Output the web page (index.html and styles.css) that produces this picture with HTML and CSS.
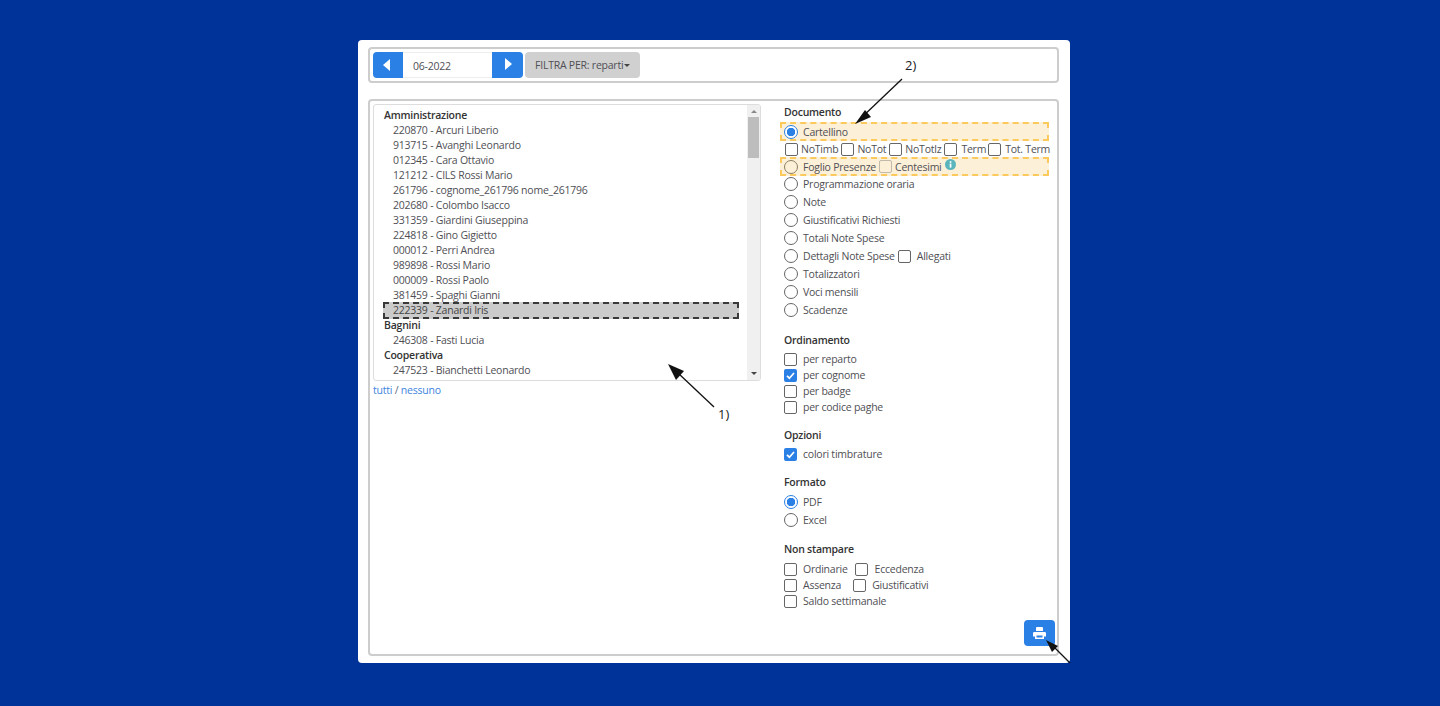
FILE: index.html
```html
<!DOCTYPE html>
<html lang="it">
<head>
<meta charset="utf-8">
<title>Stampa cartellino</title>
<link rel="stylesheet" href="styles.css">
</head>
<body>
<main class="card">
  <div class="toolbar">
    <button class="nav nav-l"><svg width="8" height="12" viewBox="0 0 8 12"><path d="M7 0v12L0 6z" fill="#fff"/></svg></button>
    <div class="date">06-2022</div>
    <button class="nav nav-r"><svg width="8" height="12" viewBox="0 0 8 12"><path d="M1 0v12l7-6z" fill="#fff"/></svg></button>
    <button class="filter">FILTRA PER: reparti<span class="caret"></span></button>
  </div>
  <div class="panel">
    <section class="left">
      <div class="listbox">
        <div class="list">
          <div class="grp">Amministrazione</div>
          <div class="item">220870 - Arcuri Liberio</div>
          <div class="item">913715 - Avanghi Leonardo</div>
          <div class="item">012345 - Cara Ottavio</div>
          <div class="item">121212 - CILS Rossi Mario</div>
          <div class="item">261796 - cognome_261796 nome_261796</div>
          <div class="item">202680 - Colombo Isacco</div>
          <div class="item">331359 - Giardini Giuseppina</div>
          <div class="item">224818 - Gino Gigietto</div>
          <div class="item">000012 - Perri Andrea</div>
          <div class="item">989898 - Rossi Mario</div>
          <div class="item">000009 - Rossi Paolo</div>
          <div class="item">381459 - Spaghi Gianni</div>
          <div class="item sel">222339 - Zanardi Iris</div>
          <div class="grp">Bagnini</div>
          <div class="item">246308 - Fasti Lucia</div>
          <div class="grp">Cooperativa</div>
          <div class="item">247523 - Bianchetti Leonardo</div>
        </div>
        <div class="scroll">
          <span class="up"></span>
          <span class="thumb"></span>
          <span class="down"></span>
        </div>
      </div>
      <div class="links"><a>tutti</a> / <a>nessuno</a></div>
    </section>
    <section class="right">
      <h4 class="h-doc">Documento</h4>
      <div class="row hl"><i class="radio on"></i><span>Cartellino</span></div>
      <div class="row sub">
        <i class="box"></i><span class="s1">NoTimb</span>
        <i class="box"></i><span class="s2">NoTot</span>
        <i class="box"></i><span class="s3">NoTotlz</span>
        <i class="box"></i><span class="s4">Term</span>
        <i class="box"></i><span class="s5">Tot. Term</span>
      </div>
      <div class="row hl hl2"><i class="radio"></i><span>Foglio Presenze</span><i class="box cent"></i><span class="c-t">Centesimi</span><svg class="info" width="11" height="11" viewBox="0 0 11 11"><circle cx="5.5" cy="5.5" r="5.5" fill="#5bb5bd"/><rect x="4.7" y="4.6" width="1.7" height="4" fill="#fff"/><rect x="4.7" y="2.2" width="1.7" height="1.6" fill="#fff"/></svg></div>
      <div class="row r18"><i class="radio"></i><span>Programmazione oraria</span></div>
      <div class="row r18"><i class="radio"></i><span>Note</span></div>
      <div class="row r18"><i class="radio"></i><span>Giustificativi Richiesti</span></div>
      <div class="row r18"><i class="radio"></i><span>Totali Note Spese</span></div>
      <div class="row r18"><i class="radio"></i><span>Dettagli Note Spese</span><i class="box allegati"></i><span class="t3">Allegati</span></div>
      <div class="row r18"><i class="radio"></i><span>Totalizzatori</span></div>
      <div class="row r18"><i class="radio"></i><span>Voci mensili</span></div>
      <div class="row r18"><i class="radio"></i><span>Scadenze</span></div>

      <h4 class="h-sec h-ord">Ordinamento</h4>
      <div class="row r16 first"><i class="box"></i><span class="t3">per reparto</span></div>
      <div class="row r16"><i class="box on"><svg width="13" height="13" viewBox="0 0 13 13"><path d="M3 6.8l2.4 2.4L10 4" fill="none" stroke="#fff" stroke-width="1.7"/></svg></i><span class="t3">per cognome</span></div>
      <div class="row r16"><i class="box"></i><span class="t3">per badge</span></div>
      <div class="row r16"><i class="box"></i><span class="t3">per codice paghe</span></div>

      <h4 class="h-sec">Opzioni</h4>
      <div class="row r16 first"><i class="box on"><svg width="13" height="13" viewBox="0 0 13 13"><path d="M3 6.8l2.4 2.4L10 4" fill="none" stroke="#fff" stroke-width="1.7"/></svg></i><span class="t3">colori timbrature</span></div>

      <h4 class="h-sec">Formato</h4>
      <div class="row r18 first"><i class="radio on"></i><span>PDF</span></div>
      <div class="row r18"><i class="radio"></i><span>Excel</span></div>

      <h4 class="h-sec">Non stampare</h4>
      <div class="row r16 first2"><i class="box"></i><span class="t3">Ordinarie</span><i class="box gap8"></i><span class="t4">Eccedenza</span></div>
      <div class="row r16"><i class="box"></i><span class="t3">Assenza</span><i class="box gap11"></i><span class="t3">Giustificativi</span></div>
      <div class="row r16"><i class="box"></i><span class="t3">Saldo settimanale</span></div>

      <div class="actions">
        <button class="print"><svg width="13" height="12" viewBox="0 0 13 12"><path fill="#fff" d="M3 1.200C3 .5 3.500 0 4.200 0h4.600C9.500 0 10 .5 10 1.200V4H3zM1.300 5h10.400c.7 0 1.300.6 1.300 1.300V9.500h-2V12H2V9.500H0V6.300C0 5.600.6 5 1.300 5zM3.500 8.500V10.500h6V8.500z"/></svg></button>
      </div>
    </section>
  </div>
</main>
<svg class="notes" width="1440" height="706" viewBox="0 0 1440 706">
  <g stroke="#111" stroke-width="1.300" fill="none">
    <path d="M902 79 860 119"/><path d="M714 407 678 373"/><path d="M1070 663 1051 644"/>
  </g>
  <g fill="#111">
    <path d="M855 124 865 110 871 117z"/>
    <path d="M668 364 684 371 676 380z"/>
    <path d="M1046 640 1058 646 1052 652z"/>
  </g>
  <text x="905" y="70" class="note">2)</text>
  <text x="718" y="419" class="note">1)</text>
</svg>
</body>
</html>
```
FILE: styles.css
```css
* { box-sizing: border-box; }
html, body { margin: 0; height: 706px; overflow: hidden; }
body {
  background: #00339a;
  font-family: "Open Sans", "Noto Sans", sans-serif;
  font-size: 10.5px;
  letter-spacing: -.23px;
  color: #4f4f55;
  position: relative;
}
.card {
  width: 712px;
  height: 623px;
  margin: 40px 0 0 358px;
  padding: 7px 11px 7px 10px;
  background: #fff;
  border-radius: 4px;
}
.toolbar {
  height: 36px;
  border: 2px solid #cdcdcd;
  border-radius: 4px;
  padding: 3px;
  display: flex;
  align-items: stretch;
}
button { border: 0; font: inherit; letter-spacing: inherit; padding: 0; }
.nav {
  width: 31px;
  height: 26px;
  background: #2a80e4;
  display: flex;
  align-items: center;
  justify-content: center;
}
.nav-l { width: 30px; border-radius: 4px 0 0 4px; padding-right: 2px; }
.nav-r { border-radius: 0 4px 4px 0; padding-bottom: 2px; }
.date {
  width: 89px;
  height: 26px;
  padding-left: 10px;
  line-height: 26px;
  border: 1px solid #eee;
  border-width: 1px 0;
}
.filter {
  margin-left: 2px;
  width: 115px;
  height: 26px;
  background: #d0d0d0;
  border-radius: 4px;
  color: #4f4f55;
  display: flex;
  align-items: center;
  padding-left: 10px;
}
.caret {
  margin-left: 1px;
  border: 3px solid transparent;
  border-top-color: #444;
  border-bottom: 0;
}
.panel {
  margin-top: 16px;
  height: 557px;
  border: 2px solid #cdcdcd;
  border-radius: 4px;
  padding: 3px;
  display: flex;
}
.left { width: 388px; flex: none; }
.listbox {
  height: 277px;
  border: 1px solid #ddd;
  border-radius: 3px;
  display: flex;
  overflow: hidden;
}
.list { flex: 1; padding: 3px 8px 0 9px; overflow: hidden; }
.grp { height: 15px; line-height: 15px; font-weight: 600; color: #333; padding-left: 1px; }
.item { height: 15px; line-height: 15px; padding-left: 10px; }
.sel {
  height: 17px;
  margin: -1px 0;
  position: relative;
  background: #cbcbcb;
  border: 2px dashed #3a3a3a;
  line-height: 13px;
  padding-left: 8px;
  color: #444;
}
.scroll {
  width: 13px;
  flex: none;
  background: #f0f0f0;
  display: flex;
  flex-direction: column;
  align-items: center;
}
.up, .down { width: 0; height: 0; border: 3px solid transparent; }
.up { border-bottom: 3px solid #888; border-top: 0; margin-top: 5px; }
.thumb { width: 11px; height: 41px; margin-top: 4px; background: #bdbdbd; }
.down { border-top: 3px solid #444; border-bottom: 0; margin-top: auto; margin-bottom: 5px; }
.links { margin-top: 2px; height: 15px; line-height: 15px; color: #5b6c80; }
.links a { color: #3d84e0; }
.right {
  margin-left: 23px;
  width: 271px;
  flex: none;
  display: flex;
  flex-direction: column;
}
h4 {
  margin: 0;
  font-size: 10.500px;
  font-weight: 600;
  color: #333;
  height: 16px;
  line-height: 16px;
}
.h-sec { margin-top: 12px; }
.h-ord { margin-top: 13px; }
.row { display: flex; align-items: center; white-space: nowrap; }
.r18 { height: 18px; }
.r16 { height: 16px; }
.first { margin-top: 3px; }
.first2 { margin-top: 4px; }
.hl {
  height: 19px;
  width: 269px;
  margin: 2px 0 0 -4px;
  padding-left: 2px;
  background: #fdf0d8;
  border: 2px dashed #fcc95c;
}
.hl2 { margin: 0 0 -1px -4px; }
.sub { height: 16px; padding-left: 1px; }
.radio {
  flex: none;
  width: 14px;
  height: 14px;
  border: 1.500px solid #666;
  border-radius: 50%;
  margin-right: 5px;
  background: #fff;
}
.hl .radio { background: transparent; }
.hl2 .radio { border-color: #8a7f62; }
.radio.on { border-color: #2a80e4; background: radial-gradient(circle, #2a80e4 0 4px, #fff 4.500px); }
.box {
  flex: none;
  width: 13px;
  height: 13px;
  border: 1.500px solid #666;
  border-radius: 2px;
  display: block;
}
.box.on { background: #2a80e4; border: 0; display: flex; align-items: center; justify-content: center; }
.s1 { margin: 0 3px; }
.s2 { margin: 0 3px 0 3px; }
.s3 { margin: 0 3px 0 3px; }
.s4 { margin: 0 2px 0 4px; }
.s5 { margin: 0 0 0 4px; }
.t3 { margin-left: 6px; }
.t4 { margin-left: 7px; }
.cent { margin-left: 3px; opacity: .4; }
.c-t { margin-left: 3px; }
.info { margin: -5px 0 0 3px; }
.allegati { margin-left: 3px; }
.gap8 { margin-left: 7px; }
.gap11 { margin-left: 12px; }
.actions { margin-top: auto; display: flex; justify-content: flex-end; padding-bottom: 5px; }
.print {
  width: 31px;
  height: 26px;
  border-radius: 4px;
  background: #2a80e4;
  display: flex;
  align-items: center;
  justify-content: center;
}
.notes { position: absolute; left: 0; top: 0; pointer-events: none; }
.note { font-family: "Open Sans", sans-serif; font-size: 13px; fill: #222; letter-spacing: 0; }
```
